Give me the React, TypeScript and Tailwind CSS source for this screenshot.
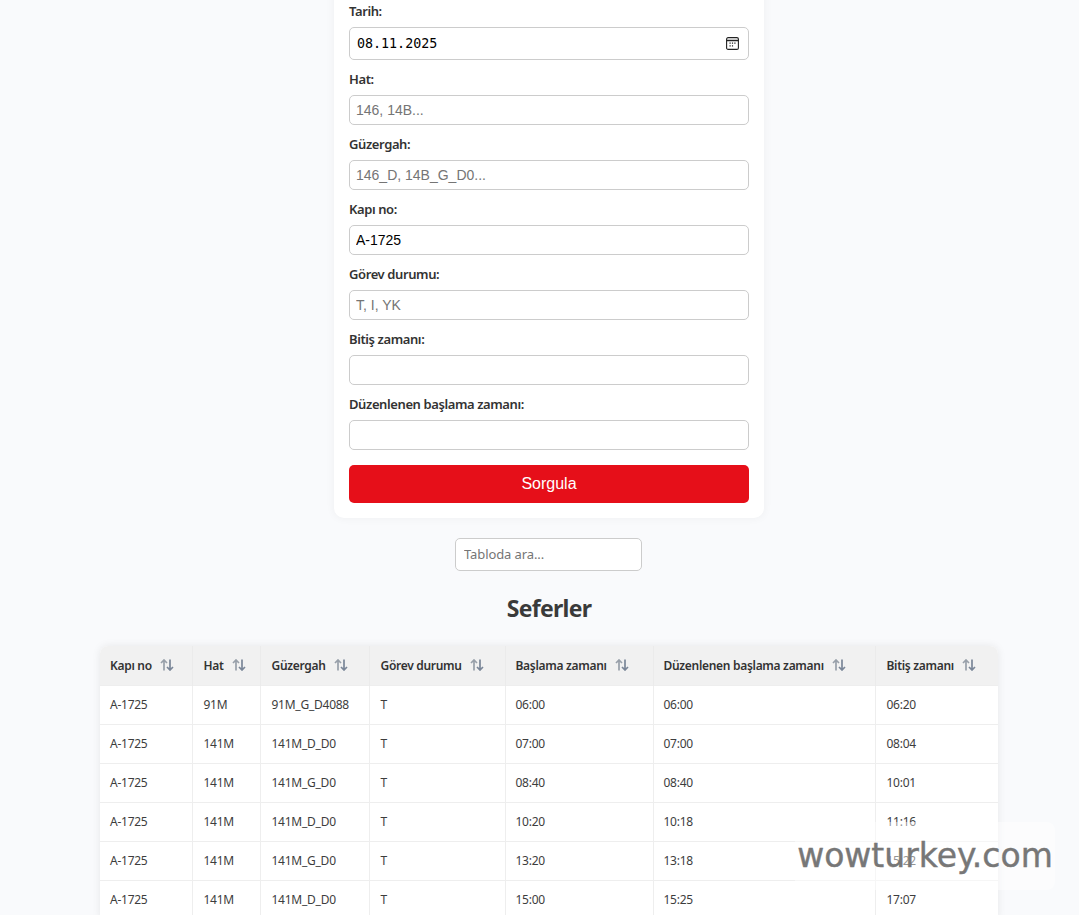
const columns = [
  { label: 'Kapı no', width: 'w-[92px]', pad: 'pl-[10px]' },
  { label: 'Hat', width: 'w-[68px]', pad: 'pl-[11px]' },
  { label: 'Güzergah', width: 'w-[109px]', pad: 'pl-[11px]' },
  { label: 'Görev durumu', width: 'w-[136px]', pad: 'pl-[11px]' },
  { label: 'Başlama zamanı', width: 'w-[148px]', pad: 'pl-[10px]' },
  { label: 'Düzenlenen başlama zamanı', width: 'w-[222px]', pad: 'pl-[10px]' },
  { label: 'Bitiş zamanı', width: 'w-[123px]', pad: 'pl-[11px]' },
]

const rows = [
  ['A-1725', '91M', '91M_G_D4088', 'T', '06:00', '06:00', '06:20'],
  ['A-1725', '141M', '141M_D_D0', 'T', '07:00', '07:00', '08:04'],
  ['A-1725', '141M', '141M_G_D0', 'T', '08:40', '08:40', '10:01'],
  ['A-1725', '141M', '141M_D_D0', 'T', '10:20', '10:18', '11:16'],
  ['A-1725', '141M', '141M_G_D0', 'T', '13:20', '13:18', '15:22'],
  ['A-1725', '141M', '141M_D_D0', 'T', '15:00', '15:25', '17:07'],
]

const fields = [
  { label: 'Hat:', placeholder: '146, 14B...', value: '' },
  { label: 'Güzergah:', placeholder: '146_D, 14B_G_D0...', value: '' },
  { label: 'Kapı no:', placeholder: '', value: 'A-1725' },
  { label: 'Görev durumu:', placeholder: 'T, I, YK', value: '' },
  { label: 'Bitiş zamanı:', placeholder: '', value: '' },
  { label: 'Düzenlenen başlama zamanı:', placeholder: '', value: '' },
]

function SortIcon() {
  return (
    <svg width="14" height="12" viewBox="0 0 14 12" fill="none" strokeWidth="1.7" className="inline-block ml-2 align-[-1px]">
      <path d="M4 11.5V1M1 4l3-3 3 3" stroke="#98a0aa" />
      <path d="M10 .5V11M7 8l3 3 3-3" stroke="#7a8698" />
    </svg>
  )
}

function CalendarIcon() {
  return (
    <svg width="13" height="13" viewBox="0 0 13 13" fill="none" className="shrink-0">
      <rect x=".6" y=".6" width="11.8" height="11.8" rx="1.5" stroke="#222" strokeWidth="1.1" />
      <path d="M.6 3.5h11.8" stroke="#222" strokeWidth="1.5" />
      <path d="M3.5 6.2h1.2M5.9 6.2h1.2M8.3 6.2h1.2M3.5 8.8h1.2M5.9 8.8h1.2" stroke="#222" strokeWidth="1.2" />
    </svg>
  )
}

export default function App() {
  return (
    <div className="relative h-[915px] overflow-hidden bg-[#f9fafc] font-['Noto_Sans',sans-serif] text-[#333]">
      <div className="w-[1098px]">
        <div className="w-[430px] mx-auto -mt-[13px] bg-white rounded-[10px] p-[15px] shadow-[0_0_10px_rgba(0,0,0,0.05)]">
          <label className="block h-5 mb-[5px] -mt-px pb-px text-[13px] leading-5 font-semibold tracking-[-0.4px] text-[#333] box-content">Tarih:</label>
          <div className="flex items-center justify-between h-[33px] mb-[10px] pl-[7px] pr-[9px] bg-white border border-[#ccc] rounded-[5px]">
            <span className="font-['DejaVu_Sans_Mono',monospace] text-[13.33px] text-black">08.11.2025</span>
            <CalendarIcon />
          </div>
          {fields.map((field) => (
            <div key={field.label}>
              <label className="block h-5 mb-[5px] -mt-px pb-px text-[13px] leading-5 font-semibold tracking-[-0.4px] text-[#333] box-content">{field.label}</label>
              <input
                readOnly
                value={field.value}
                placeholder={field.placeholder}
                className="block w-full h-[30px] mb-[10px] px-[6px] bg-white border border-[#ccc] rounded-[5px] font-['Liberation_Sans',sans-serif] text-[14px] text-black placeholder:text-[#757575] outline-none"
              />
            </div>
          ))}
          <button className="block w-full h-[38px] mt-[15px] bg-[#e60f19] rounded-[5px] font-['Liberation_Sans',sans-serif] text-[16px] text-white">
            Sorgula
          </button>
        </div>

        <div className="flex justify-center mt-5">
          <input
            readOnly
            placeholder="Tabloda ara..."
            className="w-[187px] h-[33px] mr-px px-2 pb-[2px] bg-white border border-[#ccc] rounded-[5px] text-[13px] tracking-[-0.1px] placeholder:text-[#757575] outline-none"
          />
        </div>

        <h2 className="mt-5 mb-[21px] h-[34px] text-center text-[23px] leading-[34px] font-bold tracking-[-0.7px] text-[#3a3a3a]">Seferler</h2>

        <div className="w-[898px] mx-auto rounded-t-lg overflow-hidden bg-white shadow-[0_0_8px_rgba(0,0,0,0.08)]">
          <table className="w-full table-fixed border-collapse text-[12px] tracking-[-0.25px]">
            <thead>
              <tr className="h-[39px] bg-[#f1f1f1]">
                {columns.map((col) => (
                  <th key={col.label} className={`${col.width} ${col.pad} pt-px text-left font-semibold tracking-[-0.3px] text-[#333] border-r border-[#ebebeb] last:border-r-0`}>
                    {col.label}
                    <SortIcon />
                  </th>
                ))}
              </tr>
            </thead>
            <tbody>
              {rows.map((row, i) => (
                <tr key={i} className="h-[39px] border-t border-[#eeeeee]">
                  {row.map((cell, j) => (
                    <td key={j} className={`${columns[j].pad} text-[#3d3d3d] border-r border-[#eeeeee] last:border-r-0`}>{cell}</td>
                  ))}
                </tr>
              ))}
            </tbody>
          </table>
        </div>
      </div>

      {/* watermark */}
      <div className="absolute left-[795px] top-[822px] w-[260px] h-[68px] flex items-center justify-center rounded-lg bg-white/45">
        <span className="font-['DejaVu_Sans',sans-serif] text-[33px] text-[#777] [-webkit-text-stroke:0.4px_#777]">wowturkey.com</span>
      </div>
    </div>
  )
}
